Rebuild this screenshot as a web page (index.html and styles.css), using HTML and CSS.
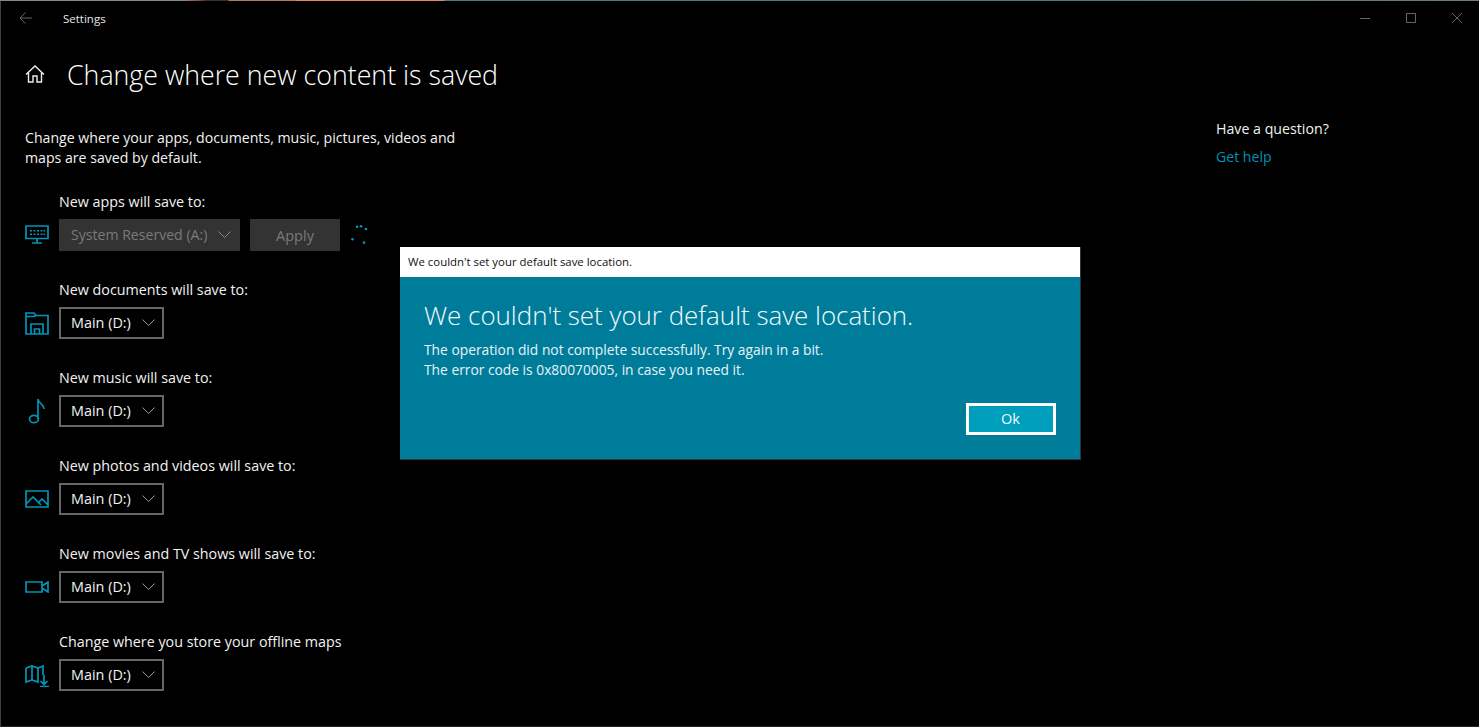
FILE: index.html
```html
<!DOCTYPE html>
<html lang="en">
<head>
<meta charset="utf-8">
<title>Settings</title>
<link rel="stylesheet" href="styles.css">
</head>
<body>
<div class="window">
  <header class="titlebar">
    <svg class="back" width="13" height="12" viewBox="0 0 13 12"><path d="M6.500 .5 1 6l5.500 5.500M1 6h12"/></svg>
    <span class="app-name">Settings</span>
    <div class="controls">
      <svg width="12" height="12" viewBox="0 0 12 12"><path d="M1 6.500h10"/></svg>
      <svg width="12" height="12" viewBox="0 0 12 12"><path d="M1.500 1.500h9v9h-9z"/></svg>
      <svg width="12" height="12" viewBox="0 0 12 12"><path d="M1 1l10 10M11 1 1 11"/></svg>
    </div>
  </header>
  <div class="columns">
    <main class="content">
      <div class="page-head">
        <svg class="home" width="20" height="20" viewBox="0 0 20 20"><path d="M1 10.500 10 2l9 8.500M3.500 8.500V18h4.500v-6h4v6h4.500V8.500"/></svg>
        <h1>Change where new content is saved</h1>
      </div>
      <p class="intro">Change where your apps, documents, music, pictures, videos and<br>maps are saved by default.</p>

      <section class="group">
        <div class="label">New apps will save to:</div>
        <div class="row">
          <svg class="icon" width="24" height="20" viewBox="0 0 24 20"><path d="M1 1h22v12.500H1zM12 13.500v4M7 18h10"/><path class="keys" d="M5 5h2v1.500H5zM8.500 5h2v1.500h-2zM12 5h2v1.500h-2zM15.500 5h2v1.500h-2zM18.500 5h1.500v1.500h-1.500zM5 8.500h2V10H5zM8.500 8.500h2V10h-2zM12 8.500h2V10h-2zM15.500 8.500h2V10h-2zM18.500 8.500h1.500V10h-1.500z"/></svg>
          <div class="select disabled wide"><span>System Reserved (A:)</span><svg class="chev" width="13" height="8" viewBox="0 0 13 8"><path d="M.5 .5l6 6 6-6"/></svg></div>
          <div class="apply">Apply</div>
          <svg class="spinner" width="18" height="22" viewBox="0 0 18 22"><circle cx="7" cy="2.700" r="1.300"/><circle cx="11" cy="2.300" r="1.300"/><circle cx="16" cy="5" r="1.300"/><circle cx="2.500" cy="15.300" r="1.300"/><circle cx="14" cy="18.600" r="1.300"/></svg>
        </div>
      </section>

      <section class="group">
        <div class="label">New documents will save to:</div>
        <div class="row">
          <svg class="icon" width="24" height="24" viewBox="0 0 24 24"><path d="M1 23V2h8l2 2.500h12V23zM1 5.500h8l2-1M6 23V13h12v10M9.500 23v-5h5v5"/></svg>
          <div class="select"><span>Main (D:)</span><svg class="chev" width="13" height="8" viewBox="0 0 13 8"><path d="M.5 .5l6 6 6-6"/></svg></div>
        </div>
      </section>

      <section class="group">
        <div class="label">New music will save to:</div>
        <div class="row">
          <svg class="icon" width="24" height="26" viewBox="0 0 24 26"><ellipse cx="9" cy="21" rx="4.500" ry="3.700"/><path d="M13 21V1c0 4 6 5 6 10"/></svg>
          <div class="select"><span>Main (D:)</span><svg class="chev" width="13" height="8" viewBox="0 0 13 8"><path d="M.5 .5l6 6 6-6"/></svg></div>
        </div>
      </section>

      <section class="group">
        <div class="label">New photos and videos will save to:</div>
        <div class="row">
          <svg class="icon" width="24" height="18" viewBox="0 0 24 18"><path d="M1 1h22v16H1zM1 14 8 7l8 8M13.500 12.500 17 9l6 6"/></svg>
          <div class="select"><span>Main (D:)</span><svg class="chev" width="13" height="8" viewBox="0 0 13 8"><path d="M.5 .5l6 6 6-6"/></svg></div>
        </div>
      </section>

      <section class="group">
        <div class="label">New movies and TV shows will save to:</div>
        <div class="row">
          <svg class="icon" width="24" height="12" viewBox="0 0 24 12"><path d="M1 1h16v10H1zM17 5l6-4v10l-6-4"/></svg>
          <div class="select"><span>Main (D:)</span><svg class="chev" width="13" height="8" viewBox="0 0 13 8"><path d="M.5 .5l6 6 6-6"/></svg></div>
        </div>
      </section>

      <section class="group">
        <div class="label">Change where you store your offline maps</div>
        <div class="row">
          <svg class="icon" width="24" height="24" viewBox="0 -2 24 24"><path d="M1 3l6-2 6 2 5-2v9M1 3v14l6-2 6 2V3M7 1v14M19 10v9M15.500 16l3.500 3.500 3.500-3.500M15 21.500h9"/></svg>
          <div class="select"><span>Main (D:)</span><svg class="chev" width="13" height="8" viewBox="0 0 13 8"><path d="M.5 .5l6 6 6-6"/></svg></div>
        </div>
      </section>
    </main>
    <aside class="help">
      <div class="help-title">Have a question?</div>
      <a class="help-link">Get help</a>
    </aside>
  </div>
</div>

<div class="dialog">
  <div class="dialog-title">We couldn't set your default save location.</div>
  <div class="dialog-body">
    <h2>We couldn't set your default save location.</h2>
    <p>The operation did not complete successfully. Try again in a bit.<br>The error code is 0x80070005, in case you need it.</p>
    <div class="dialog-actions"><div class="ok">Ok</div></div>
  </div>
</div>
</body>
</html>
```

FILE: styles.css
```css
* { box-sizing: border-box; }
html, body { margin: 0; height: 727px; overflow: hidden; background: #000; }
body { font-family: "Open Sans", "Noto Sans", sans-serif; color: #fff; font-size: 14px; }

.window {
  height: 727px;
  border-left: 1px solid #3d4347;
  border-bottom: 1px solid #222;
  position: relative;
  display: flex;
  flex-direction: column;
}
.window::before {
  content: "";
  position: absolute;
  left: -1px; right: 0; top: 0;
  height: 1px;
  background: linear-gradient(90deg, #80888c 0, #80888c 184px, #b07a60 185px, #5a4038 204px, #3a3030 205px, #3a3030 228px, #b07a60 229px, #b07a60 295px, #e28a5c 296px, #e28a5c 444px, #5a7480 445px, #5a7480 1100px, #6a7c86 1479px);
}

.titlebar { height: 36px; display: flex; align-items: center; flex: none; }
.back { margin-left: 18px; fill: none; stroke: #666; stroke-width: 1; }
.app-name { margin-left: 31px; font-size: 11.500px; color: #e8e8e8; }
.controls { margin-left: auto; display: flex; gap: 34px; padding-right: 16px; }
.controls svg { fill: none; stroke: #666; stroke-width: 1; }

.columns { flex: 1; display: flex; }
.content { flex: 1; padding-left: 24px; }

.page-head { display: flex; align-items: center; height: 40px; margin-top: 18px; gap: 22px; }
.home { fill: none; stroke: #eee; stroke-width: 1.400; flex: none; }
h1 { margin: 0; font-size: 26.750px; font-weight: 300; color: #fff; white-space: nowrap; }
.intro { margin: 34px 0 0; font-size: 14.130px; line-height: 20px; color: #f2f2f2; }

.group { margin-top: 24px; height: 64px; }
.label { font-size: 14.300px; line-height: 20px; margin-left: 34px; color: #f2f2f2; white-space: nowrap; height: 22px; }
.row { display: flex; align-items: center; height: 32px; margin-top: 5px; }
.icon { width: 24px; flex: none; fill: none; stroke: #0095b8; stroke-width: 1.700; margin-right: 10px; }
.keys { fill: #0095b8; stroke: none; }

.select {
  height: 32px;
  width: 105px;
  border: 2px solid #666;
  display: flex;
  align-items: center;
  justify-content: space-between;
  padding: 0 7px 0 10px;
  font-size: 14.400px;
  color: #f2f2f2;
  white-space: nowrap;
}
.select span { padding-bottom: 2px; }
.select.wide { width: 181px; font-size: 14.100px; }
.select.disabled { background: #333; border-color: #333; color: #7a7a7a; }
.chev { fill: none; stroke: #999; stroke-width: 1; flex: none; }
.disabled .chev { stroke: #888; }

.apply {
  width: 90px; height: 32px;
  margin-left: 10px;
  background: #333; color: #7a7a7a;
  font-size: 14.500px;
  padding-top: 1px;
  display: flex; align-items: center; justify-content: center;
}
.spinner { fill: #0099bc; margin-left: 10px; flex: none; }

.help { width: 263px; flex: none; padding-top: 83px; }
.help-title { font-size: 14.200px; line-height: 20px; color: #f2f2f2; }
.help-link { display: block; margin-top: 8px; font-size: 14.100px; line-height: 20px; color: #0091b3; }

.dialog {
  position: absolute;
  left: 400px; top: 247px;
  width: 681px; height: 213px;
  background: #007c9b;
  border-right: 1px solid #2a3a40;
  border-bottom: 1px solid #2a3a40;
}
.dialog-title {
  background: #fff; color: #111;
  height: 30px; line-height: 29px;
  padding-left: 8px;
  font-size: 11.400px;
}
.dialog-body { padding: 21px 24px 0; }
h2 { margin: 0; font-size: 25.920px; font-weight: 300; line-height: 34px; color: #f4fafc; white-space: nowrap; }
.dialog-body p { margin: 8px 0 0; font-size: 13.800px; line-height: 20px; color: #e8f3f6; }
.dialog-actions { display: flex; justify-content: flex-end; margin-top: 23px; }
.ok {
  width: 90px; height: 32px;
  border: 3px solid #fff;
  background: #009ebd;
  text-align: center;
  font-size: 14.500px;
  font-weight: 500;
  line-height: 25px;
  padding-right: 1px;
  color: #f4fafc;
}
```
